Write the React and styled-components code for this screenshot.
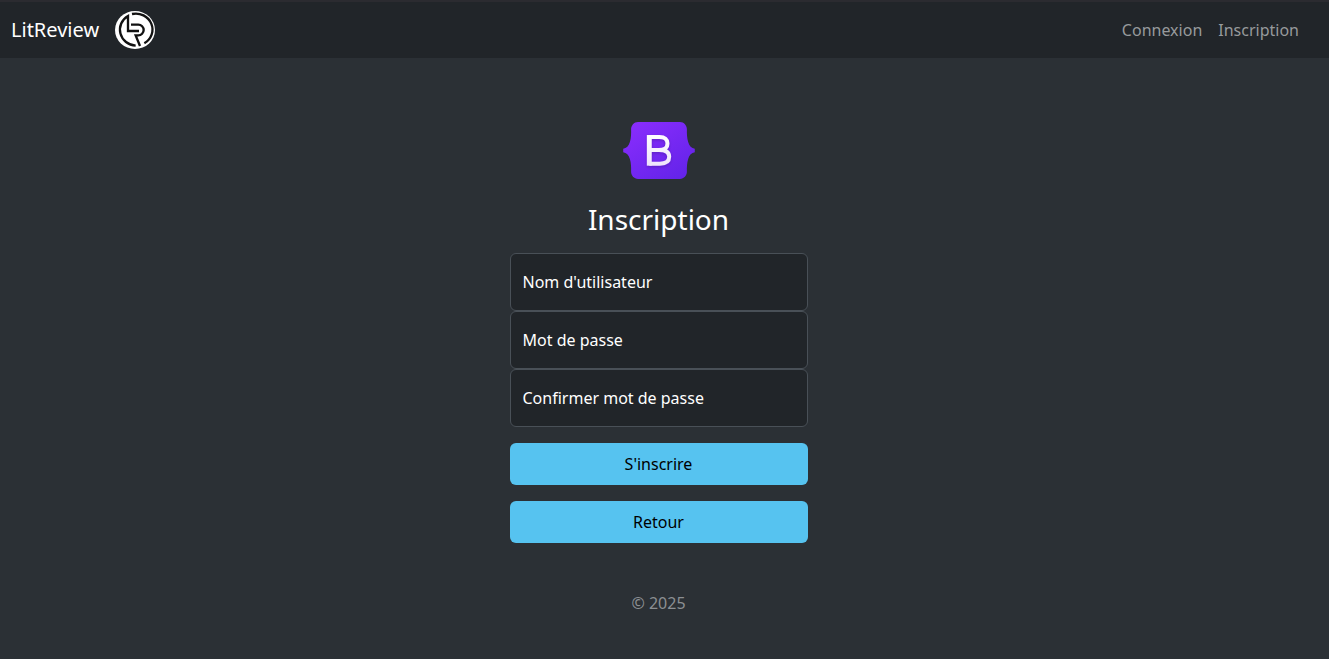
import React from 'react';
import styled, { createGlobalStyle } from 'styled-components';

const GlobalStyle = createGlobalStyle`
  *, *::before, *::after { box-sizing: border-box; }
  body {
    margin: 0;
    background: #2b3035;
    color: #fff;
    font-family: "Noto Sans", "Liberation Sans", sans-serif;
    font-size: 16px;
    line-height: 24px;
  }
`;

const Page = styled.div`
  display: flex;
  flex-direction: column;
  min-height: 100vh;
`;

const Navbar = styled.nav`
  display: flex;
  align-items: center;
  justify-content: space-between;
  padding: 8px 22px 8px 11px;
  background: #212529;
  border-top: 2px solid #2b2b30;
`;

const Brand = styled.a`
  display: flex;
  align-items: center;
  gap: 16px;
  color: #fff;
  font-size: 20px;
  line-height: 30px;
  text-decoration: none;

  svg { display: block; }
`;

const NavLinks = styled.div`
  display: flex;
`;

const NavLink = styled.a`
  padding: 8px;
  color: #979a9c;
  text-decoration: none;
`;

const Main = styled.main`
  flex: 1;
  display: flex;
  justify-content: center;
  padding: 48px 12px 48px 0;
`;

const Form = styled.form`
  display: flex;
  flex-direction: column;
  width: 100%;
  max-width: 330px;
  padding: 16px;
`;

const Logo = styled.svg`
  display: block;
  align-self: center;
  margin-bottom: 24px;
`;

const Title = styled.h1`
  margin: 0 0 18px;
  font-size: 28px;
  font-weight: 400;
  line-height: 32px;
  text-align: center;
`;

const Field = styled.div`
  display: grid;

  > * { grid-area: 1 / 1; }
`;

const Input = styled.input`
  width: 100%;
  height: 58px;
  padding: 24px 12px 8px;
  border: 1px solid #495057;
  border-radius: 6px;
  background: #212529;
  color: #fff;
  font: inherit;

  &:focus {
    border-color: #56c3f0;
    outline: none;
  }
`;

const Label = styled.label`
  align-self: center;
  padding: 0 13px;
  pointer-events: none;

  ${Input}:focus + &, ${Input}:not(:placeholder-shown) + & {
    align-self: start;
    padding-top: 4px;
    font-size: 13px;
    line-height: 20px;
  }
`;

const Button = styled.button`
  margin-top: 16px;
  padding: 9px 12px;
  border: 0;
  border-radius: 6px;
  background: #56c3f0;
  color: #000;
  font: inherit;
  cursor: pointer;
`;

const Copyright = styled.p`
  margin: 48px 0 0;
  color: #8b8f93;
  text-align: center;
`;

const fields = [
  { id: 'username', label: "Nom d'utilisateur", type: 'text' },
  { id: 'password', label: 'Mot de passe', type: 'password' },
  { id: 'confirm', label: 'Confirmer mot de passe', type: 'password' },
];

function BrandMark() {
  return (
    <svg width="40" height="38" viewBox="0 0 120 114" aria-hidden="true">
      <ellipse cx="60" cy="57" rx="60" ry="57" fill="#fff" />
      <g fill="none" stroke="#111" strokeWidth="7">
        <path d="M62 104 A50 48 0 0 1 39 15 V60 H72" />
        <path d="M51 9 A50 48 0 0 1 88 97" />
        <path d="M48 41 H70 A16 16 0 0 1 70 73 H62 L75 105" />
      </g>
    </svg>
  );
}

function BootstrapLogo() {
  return (
    <Logo width="72" height="57" viewBox="0 0 118 94" role="img" aria-label="Bootstrap">
      <defs>
        <linearGradient id="badge" x1="0.1" y1="0" x2="0.9" y2="1">
          <stop offset="0" stopColor="#8a2dfd" />
          <stop offset="1" stopColor="#6223e8" />
        </linearGradient>
        <linearGradient id="mark" x1="0" y1="20" x2="0" y2="74" gradientUnits="userSpaceOnUse">
          <stop offset="0" stopColor="#fff" />
          <stop offset="1" stopColor="#eee2fb" />
        </linearGradient>
        <filter id="shadow" x="-20%" y="-20%" width="140%" height="140%">
          <feDropShadow dx="0" dy="2" stdDeviation="3" floodOpacity="0.2" />
        </filter>
      </defs>
      <path
        fill="url(#badge)"
        d="M24.5 0C17.8 0 12.8 5.9 13 12.3c.2 6.1 0 14.1-2 20.6C8.9 39.4 5.5 43.5 0 44v6c5.5.5 8.9 4.6 11 11.1 2 6.5 2.2 14.5 2 20.6C12.8 88.1 17.8 94 24.5 94h69c6.7 0 11.7-5.9 11.5-12.3-.2-6.1.1-14.1 2.1-20.6 2-6.5 5.4-10.6 10.9-11.1v-6c-5.5-.5-8.9-4.6-10.9-11.1-2-6.5-2.3-14.5-2.1-20.6C105.2 5.9 100.2 0 93.5 0z"
      />
      <g filter="url(#shadow)" fill="none" stroke="url(#mark)">
        <path strokeWidth="8" d="M43 21.500 V72" />
        <path strokeWidth="6.500" d="M43 24.700 H60 C68.500 24.700 73 29 73 35.300 C73 42 68.500 46.200 59 46.200 H43" />
        <path strokeWidth="6.500" d="M43 46.200 H60 C71 46.200 75.800 50.500 75.800 57.500 C75.800 65 70.500 68.800 60.500 68.800 H43" />
      </g>
    </Logo>
  );
}

export default function App() {
  return (
    <Page>
      <GlobalStyle />
      <Navbar>
        <Brand href="#">
          LitReview
          <BrandMark />
        </Brand>
        <NavLinks>
          <NavLink href="#connexion">Connexion</NavLink>
          <NavLink href="#inscription">Inscription</NavLink>
        </NavLinks>
      </Navbar>
      <Main>
        <Form onSubmit={(event) => event.preventDefault()}>
          <BootstrapLogo />
          <Title>Inscription</Title>
          {fields.map(({ id, label, type }) => (
            <Field key={id}>
              <Input id={id} type={type} placeholder=" " />
              <Label htmlFor={id}>{label}</Label>
            </Field>
          ))}
          <Button type="submit">S'inscrire</Button>
          <Button type="button">Retour</Button>
          <Copyright>© 2025</Copyright>
        </Form>
      </Main>
    </Page>
  );
}
